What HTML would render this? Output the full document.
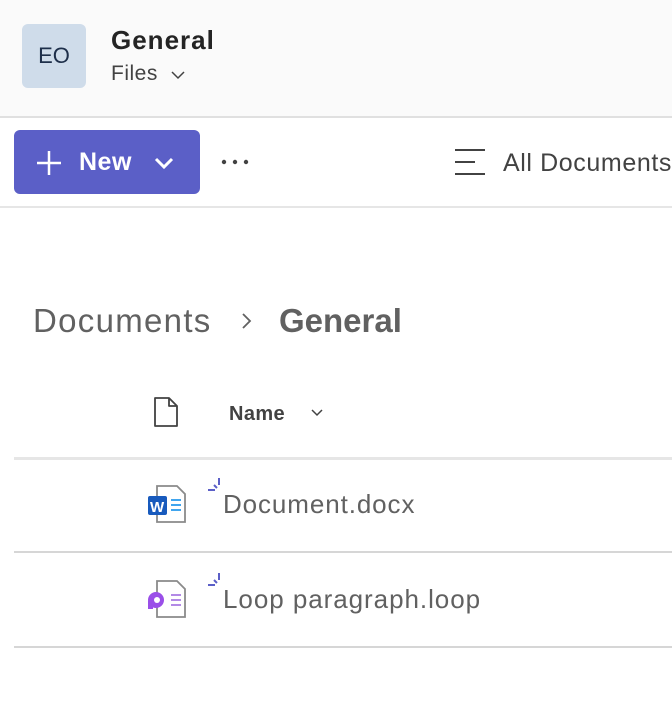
<!DOCTYPE html>
<html><head><style>
body{margin:0;width:672px;height:716px;background:#fff;font-family:"Liberation Sans",sans-serif;position:relative;overflow:hidden;color:#242424}
.a{position:absolute}
</style></head><body>
<div class="a" style="left:0;top:0;width:672px;height:116px;background:#fafafa;border-bottom:2px solid #e0e0e0"></div>
<div class="a" style="left:22px;top:24px;width:64px;height:64px;background:#cfdcea;border-radius:6px;color:#1e2f4a;font-size:22px;line-height:64px;text-align:center">EO</div>
<div class="a" style="left:111px;top:25px;font-size:26px;font-weight:bold;color:#242424;letter-spacing:1px">General</div>
<div class="a" style="left:111px;top:62px;font-size:21px;color:#424242;letter-spacing:0.5px">Files <svg width="16" height="10" style="margin-left:6px"><path d="M2 2l6 6 6-6" fill="none" stroke="#424242" stroke-width="1.5"/></svg></div>
<div class="a" style="left:14px;top:130px;width:186px;height:64px;background:#5b5fc7;border-radius:6px"></div>
<svg class="a" style="left:36px;top:150px" width="26" height="26"><path d="M13 1v24M1 13h24" stroke="#fff" stroke-width="2.5"/></svg>
<div class="a" style="left:79px;top:148px;font-size:25px;font-weight:bold;color:#fff;letter-spacing:0.5px">New</div>
<svg class="a" style="left:153px;top:156px" width="22" height="14"><path d="M3 3l8 8 8-8" fill="none" stroke="#fff" stroke-width="3"/></svg>
<svg class="a" style="left:221px;top:157px" width="30" height="10"><circle cx="3" cy="5" r="2.2" fill="#424242"/><circle cx="14" cy="5" r="2.2" fill="#424242"/><circle cx="25" cy="5" r="2.2" fill="#424242"/></svg>
<svg class="a" style="left:453px;top:148px" width="36" height="30"><path d="M2 2h30M2 14h20M2 26h30" stroke="#424242" stroke-width="2"/></svg>
<div class="a" style="left:503px;top:149px;font-size:25px;color:#424242;white-space:nowrap;letter-spacing:0.6px">All Documents</div>
<div class="a" style="left:0;top:206px;width:672px;height:2px;background:#e6e6e6"></div>
<div class="a" style="left:33px;top:302px;font-size:33px;color:#616161;letter-spacing:1.3px">Documents</div>
<svg class="a" style="left:241px;top:312px" width="12" height="18"><path d="M2 2l7 7-7 7" fill="none" stroke="#616161" stroke-width="1.8"/></svg>
<div class="a" style="left:279px;top:302px;font-size:33px;font-weight:bold;color:#616161">General</div>
<svg class="a" style="left:153px;top:396px" width="26" height="32"><path d="M2 2h14l8 8v20H2z M16 2v8h8" fill="none" stroke="#424242" stroke-width="1.8" stroke-linejoin="round"/></svg>
<div class="a" style="left:229px;top:403px;font-size:20px;font-weight:bold;color:#424242;letter-spacing:0.4px">Name</div>
<svg class="a" style="left:310px;top:408px" width="14" height="10"><path d="M2 2l5 5 5-5" fill="none" stroke="#424242" stroke-width="1.5"/></svg>
<div class="a" style="left:14px;top:457px;width:658px;height:3px;background:#e6e6e6"></div>
<svg class="a" style="left:145px;top:484px" width="42" height="40"><path d="M12 2h20l8 8v28H12z" fill="#fff" stroke="#8a8a8a" stroke-width="1.8"/><rect x="3" y="12" width="19" height="19" rx="2" fill="#185abd"/><text x="5" y="28" font-size="15" font-weight="bold" fill="#fff" font-family="Liberation Sans">W</text><path d="M26 16h10M26 21h10M26 26h10" stroke="#41a5ee" stroke-width="2"/></svg>
<svg class="a" style="left:205px;top:476px" width="20" height="20"><path d="M3 14h7M9 9l3 3M14 2v7" stroke="#5b5fc7" stroke-width="2"/></svg>
<div class="a" style="left:223px;top:489px;font-size:26px;color:#616161;letter-spacing:0.9px">Document.docx</div>
<div class="a" style="left:14px;top:551px;width:658px;height:2px;background:#d6d6d6"></div>
<svg class="a" style="left:145px;top:579px" width="42" height="40"><path d="M12 2h20l8 8v28H12z" fill="#fff" stroke="#8a8a8a" stroke-width="1.8"/><circle cx="11" cy="21" r="8" fill="#9a4fe8"/><circle cx="12" cy="21" r="3" fill="#fff"/><rect x="3" y="22" width="5" height="8" fill="#9a4fe8"/><path d="M26 16h10M26 21h10M26 26h10" stroke="#b38ae6" stroke-width="2"/></svg>
<svg class="a" style="left:205px;top:571px" width="20" height="20"><path d="M3 14h7M9 9l3 3M14 2v7" stroke="#5b5fc7" stroke-width="2"/></svg>
<div class="a" style="left:223px;top:584px;font-size:26px;color:#616161;letter-spacing:0.95px">Loop paragraph.loop</div>
<div class="a" style="left:14px;top:646px;width:658px;height:2px;background:#d6d6d6"></div>
</body></html>
